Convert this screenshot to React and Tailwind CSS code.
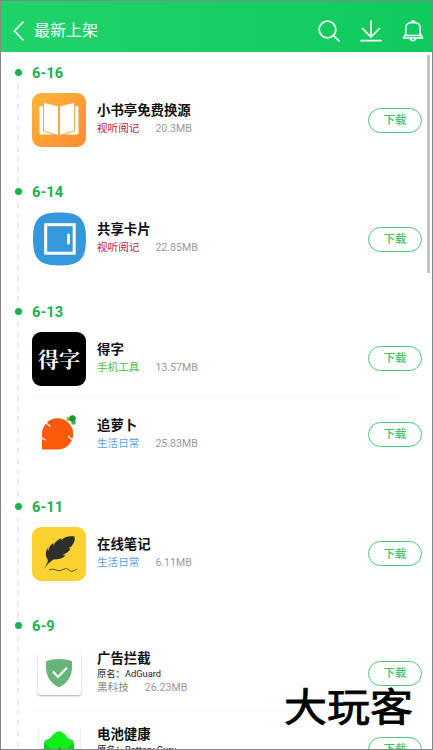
const groups = [
  {
    date: "6-16",
    apps: [{ name: "小书亭免费换源", tag: "视听阅记", tagColor: "text-[#b8233f]", size: "20.3MB", Icon: BookIcon }],
  },
  {
    date: "6-14",
    apps: [{ name: "共享卡片", tag: "视听阅记", tagColor: "text-[#b8233f]", size: "22.85MB", Icon: CardIcon }],
  },
  {
    date: "6-13",
    apps: [
      { name: "得字", tag: "手机工具", tagColor: "text-[#3fc043]", size: "13.57MB", Icon: DeziIcon },
      { name: "追萝卜", tag: "生活日常", tagColor: "text-[#5a9cec]", size: "25.83MB", Icon: CarrotIcon },
    ],
  },
  {
    date: "6-11",
    apps: [{ name: "在线笔记", tag: "生活日常", tagColor: "text-[#5a9cec]", size: "6.11MB", Icon: FeatherIcon }],
  },
  {
    date: "6-9",
    apps: [
      { name: "广告拦截", original: "AdGuard", tag: "黑科技", tagColor: "text-[#8d8983]", size: "26.23MB", Icon: ShieldIcon },
      { name: "电池健康", original: "Battery Guru", Icon: BatteryIcon },
    ],
  },
];

function BookIcon() {
  return (
    <svg viewBox="0 0 54 54" className="size-[54px]">
      <defs>
        <linearGradient id="book" x1="0" y1="0" x2="1" y2="1">
          <stop offset="0" stopColor="#fbb836" />
          <stop offset="1" stopColor="#fb8b32" />
        </linearGradient>
      </defs>
      <rect width="54" height="54" rx="9" fill="url(#book)" />
      <path d="M11 13H9q-1.500 0-1.500 1.500V40q0 1.500 1.500 1.500h15L11 37.500zM43 13h2q1.500 0 1.500 1.500V40q0 1.500-1.500 1.500H30l13-4z" fill="#fff" />
      <path d="M11.500 9.200L26.500 13v29.500l-15-4.500zM42.500 9.200L27.500 13v29.500l15-4.500z" fill="#fff" stroke="#fba03a" strokeWidth="0.900" strokeLinejoin="round" />
    </svg>
  );
}

function CardIcon() {
  return (
    <svg viewBox="0 0 54 54" className="size-[54px]">
      <path d="M27.500.5C48 .5 54 7 54 27S48 53.500 27.500 53.500 1 47 1 27 7 .5 27.500.5z" fill="#3598dc" />
      <rect x="13.700" y="12.700" width="28.500" height="28.500" fill="none" stroke="#fff" strokeWidth="3" />
      <rect x="35" y="21.500" width="3" height="11" rx="1.500" fill="#fff" />
    </svg>
  );
}

function DeziIcon() {
  return (
    <div className="flex size-[54px] items-center justify-center rounded-[9px] bg-black font-['Noto_Serif_CJK_SC','Noto_Sans_CJK_SC',serif] text-[21px] leading-none font-bold text-white">
      得字
    </div>
  );
}

function CarrotIcon() {
  return (
    <svg viewBox="0 0 54 54" className="size-[54px]">
      <path d="M10 41.500V26a15.600 15.600 0 1 1 15.600 15.500z" fill="#fb5a0b" />
      <path d="M13.500 14.500l4.500 3.500M10 30l3.500 2M36.500 28.500l4.500 4" stroke="#fff" strokeWidth="1.300" strokeLinecap="round" />
      <circle cx="36.500" cy="11" r="2" fill="#7cc52c" />
      <circle cx="41.500" cy="14.500" r="2.300" fill="#4db32f" />
      <circle cx="40.500" cy="10.500" r="3.300" fill="#189a35" />
    </svg>
  );
}

function FeatherIcon() {
  return (
    <svg viewBox="0 0 54 54" className="size-[54px]">
      <rect width="54" height="54" rx="9" fill="#fbd22f" />
      <path
        d="M11.500 43c2-4 4-7 4.500-10-3-4-2.500-8-.5-12l1 3c0-4 2-6 5-8v3c1-4 4-6 8-8l-1 2.500c4-4 9-5 14-4 1 4-1 7-3 10l-3 1.500 2 .5c-2 4-5 5-8 6.500l3 .5c-3 3-7 4-12 4-4 2.500-7 5.500-10 10.500z"
        fill="#2d2f2d"
      />
      <path d="M17 43q4-2 7 0t7-.5 6 .5 8-1" fill="none" stroke="#4d4522" strokeWidth="0.900" />
    </svg>
  );
}

function ShieldIcon() {
  return (
    <div className="flex size-[54px] items-center justify-center">
      <div className="flex size-[43px] items-center justify-center rounded-[3px] bg-white shadow-[0_1px_2px_rgba(0,0,0,0.35)]">
        <svg viewBox="0 0 30 30" className="size-[30px]">
          <path d="M15 1c5 0 9 .8 13 2.300C29 15 26 24 15 29.500 4 24 1 15 2 3.300 6 1.800 10 1 15 1z" fill="#67b57a" />
          <path d="M9 13.500l5 5.500 9-9.500" fill="none" stroke="#fff" strokeWidth="2" />
        </svg>
      </div>
    </div>
  );
}

function BatteryIcon() {
  return (
    <div className="flex size-[54px] items-center justify-center">
      <div className="flex size-[43px] justify-center border-x border-[#ececec] bg-white">
        <svg viewBox="0 0 32 40" className="mt-[2px] h-[40px] w-[32px]">
          <path d="M2 10q5-.5 8-5.500 3-3 6-3.500 3 .5 6 3.500 3 5 8 5.500l1.500 11L27 36H5L.5 21z" fill="#12ee18" />
          <path d="M1.500 12q5 4 8 10l3 14H5L.5 21zM30.500 12q-5 4-8 10l-3 14H27l4.500-15z" fill="#0ad02b" />
          <path d="M13 21l4-3 1 3" fill="none" stroke="#078d22" strokeWidth="1.200" />
        </svg>
      </div>
    </div>
  );
}

function BackIcon() {
  return (
    <svg viewBox="0 0 12 20" className="h-[20px] w-[12px]" fill="none" stroke="#fff" strokeWidth="1.600" strokeLinecap="round">
      <path d="M10 1L1.500 10l8.500 9" />
    </svg>
  );
}

function SearchIcon() {
  return (
    <svg viewBox="0 0 22 22" className="size-[22px]" fill="none" stroke="#fff" strokeWidth="1.700" strokeLinecap="round">
      <circle cx="9.500" cy="9.500" r="8.300" />
      <path d="M15.600 15.600l5.400 5.200" />
    </svg>
  );
}

function DownloadIcon() {
  return (
    <svg viewBox="0 0 22 22" className="size-[22px]" fill="none" stroke="#fff" strokeWidth="1.700" strokeLinecap="round">
      <path d="M11 1v16M2.500 8.500L11 17l8.500-8.500M1 20.700h20" />
    </svg>
  );
}

function BellIcon() {
  return (
    <svg viewBox="0 0 22 22" className="size-[22px]" fill="none" stroke="#fff" strokeWidth="1.600" strokeLinejoin="round">
      <path d="M3.800 15.500V8q0-5 5-5.300h4.400q5 .3 5 5.300v7.500z" />
      <path d="M3.800 14L1.500 18h19l-2.300-4" />
      <path d="M9 2.200q2-2.200 4 0M8 18.500q3 4.500 6 0" />
    </svg>
  );
}

function AppRow({ app, last }) {
  const { Icon } = app;
  return (
    <div className="relative flex h-[76px] items-center">
      <Icon />
      <div className="ml-[11px] flex-1 pb-[3px]">
        <h3 className="text-[13.400px] leading-[19px] font-bold text-[#111]">{app.name}</h3>
        {app.original && <p className="text-[9.300px] leading-[11px] text-[#222]">原名：{app.original}</p>}
        <div className="flex h-[16px] gap-4 text-[10.600px] leading-[17px]">
          {app.tag && <span className={app.tagColor}>{app.tag}</span>}
          {app.size && <span className="text-[#999]">{app.size}</span>}
        </div>
      </div>
      <button className="mr-[10px] h-[25px] w-[54px] rounded-full border-[1.500px] border-[#49c975] pt-px text-[11.500px] leading-none font-medium text-[#3fc46b]">
        下载
      </button>
      {!last && <div className="absolute bottom-0 left-0 h-px w-[367px] bg-[#f6f6f6]" />}
    </div>
  );
}

export default function App() {
  return (
    <div className="relative flex h-[750px] w-[433px] flex-col overflow-hidden border border-[#858585] bg-white font-[Roboto,'Noto_Sans_CJK_SC',sans-serif]">
      <header className="flex h-[51px] shrink-0 items-center bg-linear-to-r from-[#1fd36a] to-[#0fca5d] pt-[9px] pr-[8px] pl-[12px] text-white">
        <BackIcon />
        <h1 className="ml-[9px] flex-1 text-[16px] leading-none">最新上架</h1>
        <div className="flex gap-5">
          <SearchIcon />
          <DownloadIcon />
          <BellIcon />
        </div>
      </header>

      <main className="pt-[12px]">
        {groups.map((group) => (
          <section key={group.date} className="flex">
            {/* timeline */}
            <div className="flex w-[31px] shrink-0 flex-col items-center pl-[3px]">
              <div className="mt-[5px] size-[7px] shrink-0 rounded-full bg-[#19b24f]" />
              <div className="mt-[7px] mb-[-1px] w-[2px] flex-1 bg-[repeating-linear-gradient(to_bottom,#ececec_0_5.500px,transparent_5.500px_10.500px)]" />
            </div>
            <div className="flex-1 pb-[25.300px]">
              <h2 className="h-[18px] text-[14.700px] leading-[19px] font-bold text-[#19b24f]">{group.date}</h2>
              {group.apps.map((app, i) => (
                <AppRow key={app.name} app={app} last={i === group.apps.length - 1} />
              ))}
            </div>
          </section>
        ))}
      </main>

      {/* scrollbar */}
      <div className="absolute top-[54px] right-[2px] h-[218px] w-[3px] bg-[#c4c4c4]" />

      {/* watermark */}
      <div className="absolute top-[684px] left-[283px] scale-y-90 text-[43px] leading-[44px] font-normal text-black [-webkit-text-stroke:0.900px_#000] [text-shadow:0_0_2px_#fff,0_0_2px_#fff]">
        大玩客
      </div>
    </div>
  );
}
